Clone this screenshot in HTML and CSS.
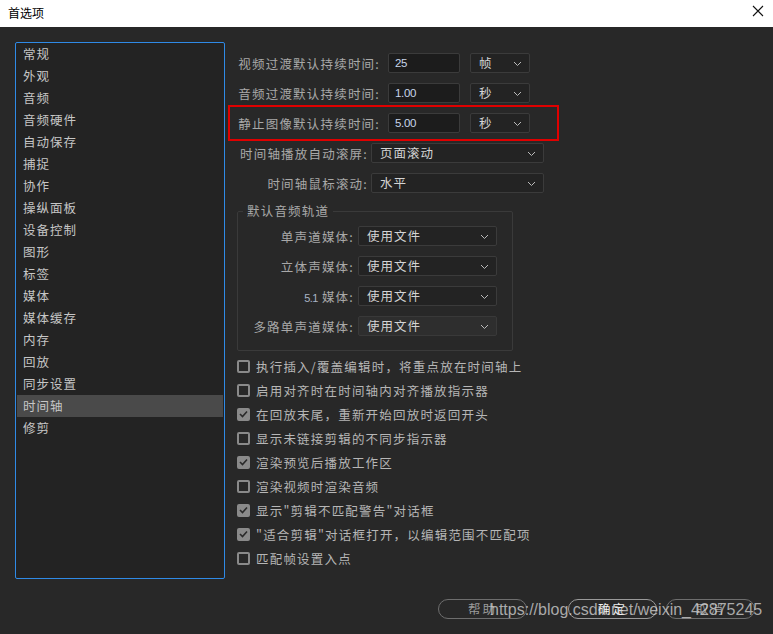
FILE: index.html
```html
<!DOCTYPE html>
<html lang="zh">
<head>
<meta charset="utf-8">
<title>首选项</title>
<link rel="stylesheet" href="styles.css">
</head>
<body>
<div class="dialog">
  <div class="titlebar">
    <span class="title">首选项</span>
    <svg class="close" width="12" height="12" viewBox="0 0 12 12"><path d="M1 1 L11 11 M11 1 L1 11" stroke="#111" stroke-width="1.1" fill="none"/></svg>
  </div>
  <div class="content">
    <ul class="nav">
      <li>常规</li>
      <li>外观</li>
      <li>音频</li>
      <li>音频硬件</li>
      <li>自动保存</li>
      <li>捕捉</li>
      <li>协作</li>
      <li>操纵面板</li>
      <li>设备控制</li>
      <li>图形</li>
      <li>标签</li>
      <li>媒体</li>
      <li>媒体缓存</li>
      <li>内存</li>
      <li>回放</li>
      <li>同步设置</li>
      <li class="active">时间轴</li>
      <li>修剪</li>
    </ul>
    <div class="pane">
      <div class="row">
        <span class="label w1">视频过渡默认持续时间:</span>
        <span class="input">25</span>
        <span class="select small">帧<svg class="chev" width="9" height="6" viewBox="0 0 9 6"><path d="M1 1 L4.5 4.5 L8 1" stroke="#bbb" stroke-width="1" fill="none"/></svg></span>
      </div>
      <div class="row">
        <span class="label w1">音频过渡默认持续时间:</span>
        <span class="input">1.00</span>
        <span class="select small">秒<svg class="chev" width="9" height="6" viewBox="0 0 9 6"><path d="M1 1 L4.5 4.5 L8 1" stroke="#bbb" stroke-width="1" fill="none"/></svg></span>
      </div>
      <div class="row marked">
        <span class="label w1">静止图像默认持续时间:</span>
        <span class="input">5.00</span>
        <span class="select small">秒<svg class="chev" width="9" height="6" viewBox="0 0 9 6"><path d="M1 1 L4.5 4.5 L8 1" stroke="#bbb" stroke-width="1" fill="none"/></svg></span>
        <span class="redbox"></span>
      </div>
      <div class="row">
        <span class="label w2">时间轴播放自动滚屏:</span>
        <span class="select wide">页面滚动<svg class="chev" width="9" height="6" viewBox="0 0 9 6"><path d="M1 1 L4.5 4.5 L8 1" stroke="#bbb" stroke-width="1" fill="none"/></svg></span>
      </div>
      <div class="row">
        <span class="label w2">时间轴鼠标滚动:</span>
        <span class="select wide">水平<svg class="chev" width="9" height="6" viewBox="0 0 9 6"><path d="M1 1 L4.5 4.5 L8 1" stroke="#bbb" stroke-width="1" fill="none"/></svg></span>
      </div>
      <fieldset class="group">
        <legend>默认音频轨道</legend>
        <div class="row">
          <span class="label w3">单声道媒体:</span>
          <span class="select mid">使用文件<svg class="chev" width="9" height="6" viewBox="0 0 9 6"><path d="M1 1 L4.5 4.5 L8 1" stroke="#bbb" stroke-width="1" fill="none"/></svg></span>
        </div>
        <div class="row">
          <span class="label w3">立体声媒体:</span>
          <span class="select mid">使用文件<svg class="chev" width="9" height="6" viewBox="0 0 9 6"><path d="M1 1 L4.5 4.5 L8 1" stroke="#bbb" stroke-width="1" fill="none"/></svg></span>
        </div>
        <div class="row">
          <span class="label w3"><span class="num">5.1</span> 媒体:</span>
          <span class="select mid">使用文件<svg class="chev" width="9" height="6" viewBox="0 0 9 6"><path d="M1 1 L4.5 4.5 L8 1" stroke="#bbb" stroke-width="1" fill="none"/></svg></span>
        </div>
        <div class="row">
          <span class="label w3">多路单声道媒体:</span>
          <span class="select mid light">使用文件<svg class="chev" width="9" height="6" viewBox="0 0 9 6"><path d="M1 1 L4.5 4.5 L8 1" stroke="#bbb" stroke-width="1" fill="none"/></svg></span>
        </div>
      </fieldset>
      <ul class="checks">
        <li><span class="box"></span>执行插入/覆盖编辑时，将重点放在时间轴上</li>
        <li><span class="box"></span>启用对齐时在时间轴内对齐播放指示器</li>
        <li><span class="box on"><svg width="9" height="8" viewBox="0 0 9 8"><path d="M1 4 L3.5 6.5 L8 1.5" stroke="#2a2a2a" stroke-width="1.6" fill="none"/></svg></span>在回放末尾，重新开始回放时返回开头</li>
        <li><span class="box"></span>显示未链接剪辑的不同步指示器</li>
        <li><span class="box on"><svg width="9" height="8" viewBox="0 0 9 8"><path d="M1 4 L3.5 6.5 L8 1.5" stroke="#2a2a2a" stroke-width="1.6" fill="none"/></svg></span>渲染预览后播放工作区</li>
        <li><span class="box"></span>渲染视频时渲染音频</li>
        <li><span class="box on"><svg width="9" height="8" viewBox="0 0 9 8"><path d="M1 4 L3.5 6.5 L8 1.5" stroke="#2a2a2a" stroke-width="1.6" fill="none"/></svg></span>显示"剪辑不匹配警告"对话框</li>
        <li><span class="box on"><svg width="9" height="8" viewBox="0 0 9 8"><path d="M1 4 L3.5 6.5 L8 1.5" stroke="#2a2a2a" stroke-width="1.6" fill="none"/></svg></span>"适合剪辑"对话框打开，以编辑范围不匹配项</li>
        <li><span class="box"></span>匹配帧设置入点</li>
      </ul>
    </div>
  </div>
  <div class="footer">
    <span class="btn help">帮助</span>
    <span class="btn ok">确定</span>
    <span class="btn cancel">取消</span>
    <span class="watermark">https://blog.csdn.net/weixin_42875245</span>
  </div>
</div>
</body>
</html>
```

FILE: styles.css
```css
html, body {
  margin: 0;
  padding: 0;
}
body {
  width: 773px;
  height: 634px;
  overflow: hidden;
  background: #282828;
  font-family: "Noto Sans CJK SC", "Microsoft YaHei", sans-serif;
  font-size: 12px;
}
.dialog {
  position: relative;
  width: 773px;
  height: 634px;
}
.titlebar {
  height: 27px;
  background: #ffffff;
  display: flex;
  align-items: center;
  justify-content: space-between;
  padding: 0 9px 0 8px;
  box-sizing: border-box;
}
.title {
  color: #000;
  font-size: 12px;
  margin-top: -3px;
}
.close {
  margin-top: -5px;
}
.content {
  display: flex;
  padding: 15px 0 0 15px;
  gap: 12px;
}
.nav {
  list-style: none;
  margin: 0;
  padding: 0 1px;
  width: 206px;
  height: 535px;
  border: 1px solid #2f8ae6;
  border-radius: 2px;
  background: #232323;
  flex: none;
}
.nav li {
  height: 22px;
  line-height: 21px;
  padding-left: 6px;
  color: #c6c6c6;
  font-size: 12.5px;
  letter-spacing: 1px;
}
.nav li.active {
  background: #4a4a4a;
}
.pane {
  width: 330px;
  padding-top: 6px;
}
.row {
  position: relative;
  display: flex;
  align-items: center;
  height: 30px;
}
.label {
  color: #a8a8a8;
  font-size: 12.5px;
  letter-spacing: 1.2px;
  text-align: right;
  flex: none;
  white-space: nowrap;
}
.w1 { width: 143px; margin-right: 8px; }
.w2 { width: 131px; margin-right: 3px; }
.w3 { width: 116px; margin-right: 4px; }
.num {
  font-family: "Liberation Sans", Arial, sans-serif;
  font-size: 11px;
  letter-spacing: -0.5px;
  color: #a8b4c4;
}
.input {
  width: 64px;
  height: 18px;
  line-height: 18px;
  background: #1c1c1c;
  border: 1px solid #3b3b3b;
  border-radius: 2px;
  color: #c8d6ea;
  font-family: "Liberation Sans", Arial, sans-serif;
  font-size: 11.5px;
  letter-spacing: -0.3px;
  padding-left: 6px;
  margin-right: 10px;
  flex: none;
}
.select {
  position: relative;
  height: 18px;
  line-height: 18px;
  background: #232323;
  border: 1px solid #3b3b3b;
  border-radius: 2px;
  color: #d4d4d4;
  font-size: 12.5px;
  letter-spacing: 1px;
  padding-left: 8px;
  flex: none;
}
.select.small { width: 50px; }
.select.wide { width: 163px; }
.select.mid { width: 129px; }
.select.light { background: #2e2e2e; border-color: #393939; }
.chev {
  position: absolute;
  right: 7px;
  top: 7px;
}
.redbox {
  position: absolute;
  left: -9px;
  top: -3px;
  width: 327px;
  height: 32px;
  border: 2px solid #e00000;
}
.group {
  margin: 5px 0 0 0;
  padding: 2px 0 9px 0;
  width: 274px;
  border: 1px solid #3a3a3a;
  border-radius: 2px;
  min-width: 0;
}
.group legend {
  padding: 0 4px;
  margin-left: 5px;
  color: #a8a8a8;
  font-size: 12.5px;
  letter-spacing: 1.2px;
  line-height: 16px;
}
.checks {
  list-style: none;
  margin: 3px 0 0 0;
  padding: 0;
}
.checks li {
  display: flex;
  align-items: center;
  height: 24px;
  color: #b6b6b6;
  font-size: 12.5px;
  letter-spacing: 1.2px;
  white-space: nowrap;
}
.box {
  width: 9px;
  height: 9px;
  border: 2px solid #8a8a8a;
  border-radius: 2px;
  margin-right: 6px;
  flex: none;
  display: flex;
  align-items: center;
  justify-content: center;
}
.box.on {
  background: #8a8a8a;
}
.footer {
  position: relative;
  display: flex;
  padding: 20px 0 0 438px;
}
.btn {
  width: 87px;
  height: 18px;
  line-height: 17px;
  border: 1px solid #6e6e6e;
  border-radius: 10px;
  text-align: center;
  color: #9a9a9a;
  font-size: 12.5px;
  letter-spacing: 2px;
  flex: none;
}
.btn.ok {
  margin-left: 41px;
  color: #f0f0f0;
  border-color: #9a9a9a;
}
.btn.cancel {
  margin-left: 9px;
}
.watermark {
  position: absolute;
  left: 490px;
  top: 22px;
  font-family: "Liberation Sans", Arial, sans-serif;
  font-size: 16px;
  color: rgba(215, 215, 215, 0.75);
  white-space: nowrap;
}
```
